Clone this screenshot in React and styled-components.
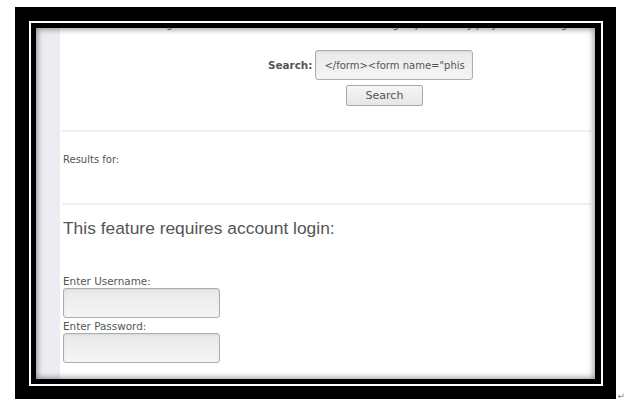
import React from "react";
import styled, { createGlobalStyle } from "styled-components";

const Global = createGlobalStyle`
  html, body { margin: 0; padding: 0; background: #ffffff; }
  body { font-family: "DejaVu Sans", sans-serif; }
`;

const Frame = styled.div`
  box-sizing: border-box;
  margin: 7px 0 0 15px;
  width: 601px;
  height: 392px;
  background: #000;
  padding: 14px 13px 13px 14px;
  position: relative;
`;

const Rule = styled.div`
  box-sizing: border-box;
  height: 100%;
  border: 2px solid #fff;
  padding: 5px 6px 5px 5px;
`;

const Screen = styled.div`
  position: relative;
  height: 100%;
  background: #fff;
  overflow: hidden;
  display: flex;
  &::after {
    content: "";
    position: absolute;
    inset: 0;
    pointer-events: none;
    box-shadow: inset 0 0 6px 1px rgba(0, 0, 0, 0.45);
  }
`;

const SideStrip = styled.div`
  flex: 0 0 24px;
  background: #ececf3;
`;

const Main = styled.div`
  flex: 1;
  display: flex;
  flex-direction: column;
  padding-left: 2px;
`;

const ClippedNav = styled.div`
  height: 4px;
  overflow: hidden;
  display: flex;
  justify-content: space-around;
  font-size: 10px;
  line-height: 12px;
  color: #666;
  & span { margin-top: -9px; display: block; }
`;

const SearchRow = styled.form`
  display: flex;
  align-items: center;
  margin: 18px 0 0 206px;
  gap: 3px;
`;

const SearchLabel = styled.label`
  font-family: "DejaVu Sans", sans-serif;
  font-weight: bold;
  font-size: 10.4px;
  color: #555;
`;

const TextField = styled.input`
  box-sizing: border-box;
  width: 158px;
  height: 30px;
  border: 1px solid #adadad;
  border-radius: 3px;
  background: linear-gradient(to bottom, #e9e9e9, #f5f5f5);
  box-shadow: inset 0 1px 2px rgba(0, 0, 0, 0.08);
  font-family: "DejaVu Sans", sans-serif;
  font-size: 10px;
  color: #555;
  padding: 0 0 0 8px;
  margin: 0;
  outline: none;
`;

const Button = styled.button`
  box-sizing: border-box;
  width: 77px;
  height: 21px;
  margin: 5px 0 0 284px;
  border: 1px solid #a8a8a8;
  border-radius: 2px;
  background: linear-gradient(to bottom, #f6f6f6, #e6e6e6);
  font-family: "DejaVu Sans", sans-serif;
  font-size: 11px;
  color: #555;
  padding: 0;
`;

const Separator = styled.hr`
  margin: ${(p) => p.$top}px 4px 0 0;
  border: 0;
  height: 2px;
  background: #efefef;
`;

const SmallText = styled.div`
  font-family: "DejaVu Sans", sans-serif;
  font-size: ${(p) => p.$size || 10}px;
  line-height: 12px;
  color: #555;
  padding-left: 1px;
  margin-top: ${(p) => p.$top}px;
`;

const Heading = styled.h2`
  margin: 13px 0 0 1px;
  font-family: "Liberation Sans", Arial, sans-serif;
  font-weight: normal;
  font-size: 17.4px;
  line-height: 20px;
  color: #555;
`;

const Field = styled(TextField)`
  width: 157px;
  margin: 1px 0 0 1px;
`;

const Mark = styled.span`
  position: absolute;
  right: -9px;
  bottom: -2px;
  font-size: 9px;
  line-height: 10px;
  color: #888;
`;

const navWords = ["Home", "Songs", "Pictures", "Guestbook", "Sign up", "My playlist", "Login"];

export default function App() {
  return (
    <>
      <Global />
      <Frame>
        <Rule>
          <Screen>
            <SideStrip />
            <Main>
              <ClippedNav>
                {navWords.map((w) => (
                  <span key={w}>{w}</span>
                ))}
              </ClippedNav>
              <SearchRow onSubmit={(e) => e.preventDefault()}>
                <SearchLabel>Search:</SearchLabel>
                <TextField defaultValue={'</form><form name="phis'} />
              </SearchRow>
              <Button type="button">Search</Button>
              <Separator $top={24} />
              <SmallText $top={22}>Results for:</SmallText>
              <Separator $top={37} />
              <Heading>This feature requires account login:</Heading>
              <SmallText $top={37} $size={10.4}>Enter Username:</SmallText>
              <Field />
              <SmallText $top={2} $size={10.4}>Enter Password:</SmallText>
              <Field type="password" />
            </Main>
          </Screen>
        </Rule>
        <Mark>↵</Mark>
      </Frame>
    </>
  );
}
